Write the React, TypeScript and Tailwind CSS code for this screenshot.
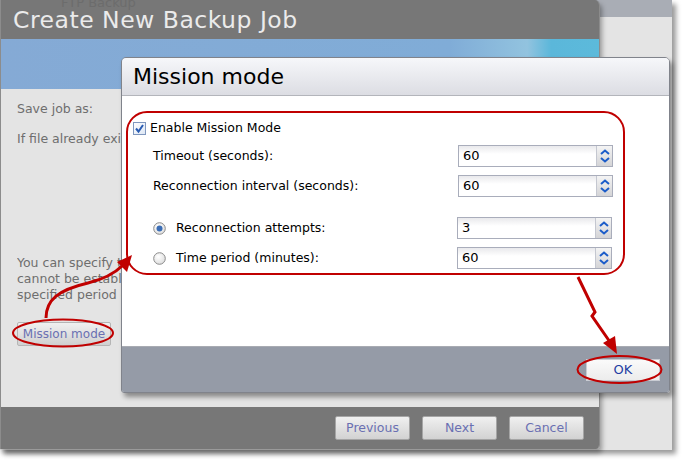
const font = "font-['DejaVu_Sans','Liberation_Sans',sans-serif]";

function Chevron({ up }: { up?: boolean }) {
  return (
    <svg width="10" height="6" viewBox="0 0 10 6">
      <path
        d={up ? "M1 5 L5 1.5 L9 5" : "M1 1 L5 4.5 L9 1"}
        fill="none"
        stroke="#1b5cc9"
        strokeWidth="2"
      />
    </svg>
  );
}

function Spinner({ value }: { value: string }) {
  return (
    <div className="flex h-[22px] w-[155px] border border-[#a9adbb] bg-white">
      <div className="flex flex-1 items-center bg-[linear-gradient(#e9e9ec,#ffffff_40%)] pl-[4px] text-[13px] text-black">
        {value}
      </div>
      <div className="flex w-[16px] flex-col items-center justify-center gap-[2px] border-l border-[#c4c7d0] bg-[linear-gradient(#f4f4f4,#d4d4d6)]">
        <Chevron up />
        <Chevron />
      </div>
    </div>
  );
}

function Radio({ checked }: { checked?: boolean }) {
  return (
    <svg width="13" height="13" viewBox="0 0 13 13">
      <defs>
        <radialGradient id={checked ? "rg1" : "rg0"} cx="0.4" cy="0.35" r="0.7">
          <stop offset="0" stopColor="#ffffff" />
          <stop offset="1" stopColor="#dcdcdc" />
        </radialGradient>
      </defs>
      <circle cx="6.5" cy="6.5" r="5.8" fill={`url(#${checked ? "rg1" : "rg0"})`} stroke="#8a8a8a" strokeWidth="1" />
      {checked && <circle cx="6.5" cy="6.5" r="3" fill="#3b6db5" />}
    </svg>
  );
}

function WizardButton({ label }: { label: string }) {
  return (
    <div className="flex h-[24px] w-[75px] items-center justify-center rounded-[2px] border border-[#a5a5a5] bg-[linear-gradient(#f0f0f0,#d2d2d2)] text-[12.5px] text-[#6a70b2]">
      {label}
    </div>
  );
}

export default function App() {
  return (
    <div className={`relative h-[465px] w-[687px] overflow-hidden bg-white ${font}`}>
      {/* far window behind */}
      <div className="absolute left-0 top-0 flex h-[450px] w-[672px] flex-col shadow-[4px_4px_5px_rgba(0,0,0,0.4)]">
        <div className="h-[17px] bg-[#a9adb5]" />
        <div className="flex-1 bg-[#e4e4e4]" />
      </div>

      {/* wizard window */}
      <div className="absolute left-0 top-0 flex h-[449px] w-[600px] flex-col overflow-hidden rounded-tr-[5px] rounded-br-[4px] border-l border-r border-[#8c8c8c] shadow-[2px_4px_5px_rgba(0,0,0,0.35)]">
        <div className="relative h-[39px] overflow-hidden bg-[#777777] pl-[12px] pt-[9px]">
          <span className="absolute left-[60px] top-[-3px] text-[13px] leading-[12px] text-[#6c6c6c]">FTP Backup</span>
          <div className="relative text-[23.5px] leading-[22px] tracking-[0.5px] text-[#ebebeb]">Create New Backup Job</div>
        </div>
        <div className="h-[50px] bg-[linear-gradient(90deg,#85aad5,#80acd7_75%,#92c3df_88%,#5bb7da_92%,#5cbadb)]" />
        <div className="flex flex-1 flex-col bg-[#e4e4e4] pl-[16px] pt-[12px] text-[12.5px] text-[#6e6e6e]">
          <div className="w-[105px] overflow-hidden whitespace-nowrap leading-[15px]">Save job as:</div>
          <div className="mt-[15px] w-[105px] overflow-hidden whitespace-nowrap leading-[15px]">If file already exists:</div>
          <div className="mt-[109px] w-[105px] overflow-hidden whitespace-nowrap leading-[16px]">
            You can specify the
            <br />
            cannot be established
            <br />
            specified period of
          </div>
          <div className="mt-[19px] flex h-[24px] w-[94px] items-center justify-center rounded-[2px] border border-[#b5b5b5] bg-[linear-gradient(#f0f0f0,#d0d0d0)] text-[12px] text-[#6a70b2]">
            Mission mode
          </div>
        </div>
        <div className="flex h-[42px] items-center justify-end gap-[12px] bg-[#777777] pr-[15px]">
          <WizardButton label="Previous" />
          <WizardButton label="Next" />
          <WizardButton label="Cancel" />
        </div>
      </div>

      {/* mission mode dialog */}
      <div className="absolute left-[121px] top-[57px] flex w-[549px] flex-col overflow-hidden rounded-t-[5px] rounded-b-[3px] border border-[#80838b] shadow-[3px_4px_5px_rgba(0,0,0,0.4)]">
        <div className="flex h-[38px] items-center border-b border-[#b3b5bb] bg-[linear-gradient(#f6f7fa,#dcdde3)] pl-[11px] text-[22px] text-black">
          Mission mode
        </div>
        <div className="h-[250px] bg-white pl-[11px] pt-[24px] text-[12.5px] text-black">
          <div className="flex h-[16px] items-center gap-[4px]">
            <svg width="13" height="13" viewBox="0 0 13 13">
              <defs>
                <linearGradient id="cb" x1="0" y1="0" x2="1" y2="1">
                  <stop offset="0" stopColor="#ffffff" />
                  <stop offset="1" stopColor="#dce6f4" />
                </linearGradient>
              </defs>
              <rect x="0.5" y="0.5" width="12" height="12" fill="url(#cb)" stroke="#7f97be" />
              <path d="M3 6.5 L5.5 9.5 L10 3" fill="none" stroke="#2a5cb3" strokeWidth="2" />
            </svg>
            <span>Enable Mission Mode</span>
          </div>
          <div className="mt-[9px] flex h-[22px] items-center pl-[20px]">
            <span className="w-[305px]">Timeout (seconds):</span>
            <Spinner value="60" />
          </div>
          <div className="mt-[8px] flex h-[22px] items-center pl-[20px]">
            <span className="w-[305px]">Reconnection interval (seconds):</span>
            <Spinner value="60" />
          </div>
          <div className="mt-[20px] flex h-[22px] items-center pl-[20px]">
            <Radio checked />
            <span className="ml-[10px] w-[281px]">Reconnection attempts:</span>
            <Spinner value="3" />
          </div>
          <div className="mt-[8px] flex h-[22px] items-center pl-[20px]">
            <Radio />
            <span className="ml-[10px] w-[281px]">Time period (minutes):</span>
            <Spinner value="60" />
          </div>
        </div>
        <div className="flex h-[46px] items-center justify-end border-t border-[#a8abb2] bg-[#959ba7] pr-[9px]">
          <div className="flex h-[22px] w-[74px] items-center justify-center border border-[#c9ccd3] bg-[linear-gradient(#fafafa,#ececec)] text-[13px] text-[#1f3fa3]">
            OK
          </div>
        </div>
      </div>

      {/* red annotations */}
      <svg className="pointer-events-none absolute left-0 top-0" width="687" height="465" viewBox="0 0 687 465">
        <g fill="none" stroke="#c00000" strokeWidth="2">
          <rect x="127" y="112" width="497" height="162" rx="20" />
          <ellipse cx="63" cy="333" rx="50" ry="13.5" />
          <ellipse cx="619.5" cy="369.5" rx="42" ry="13.5" />
          <path d="M46 318 C46 300 58 290 88 283 C104 279 114 274 122 266" strokeWidth="3" />
          <path d="M578 277 L595 312 L592 316 L610 342" strokeWidth="3" />
        </g>
        <g fill="#c00000">
          <polygon points="132,255 117,262 127,272" />
          <polygon points="617,354 603,343 615,336" />
        </g>
      </svg>
    </div>
  );
}
